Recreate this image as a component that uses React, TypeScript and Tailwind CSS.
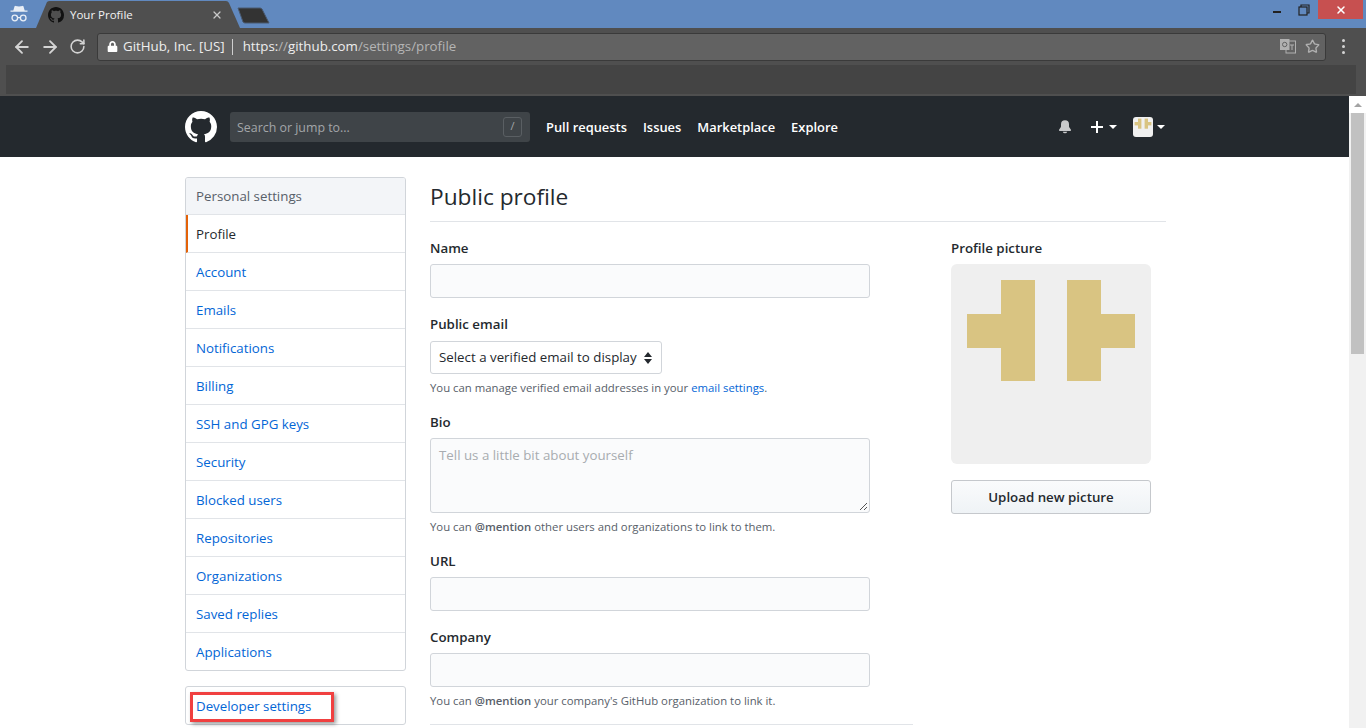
import { ArrowLeft, ArrowRight, RotateCw, Star, X } from "lucide-react";
import { GoBellFill } from "react-icons/go";
import { FaLock } from "react-icons/fa";

const menuItems = [
  "Account",
  "Emails",
  "Notifications",
  "Billing",
  "SSH and GPG keys",
  "Security",
  "Blocked users",
  "Repositories",
  "Organizations",
  "Saved replies",
  "Applications",
];

function GithubMark({ size, color }: { size: number; color: string }) {
  return (
    <svg width={size} height={size} viewBox="0 0 16 16" fill={color} className="relative shrink-0">
      <path d="M8 0C3.58 0 0 3.58 0 8c0 3.54 2.29 6.53 5.47 7.59.4.07.55-.17.55-.38 0-.19-.01-.82-.01-1.49-2.01.37-2.53-.49-2.69-.94-.09-.23-.48-.94-.82-1.13-.28-.15-.68-.52-.01-.53.63-.01 1.08.58 1.23.82.72 1.21 1.87.87 2.33.66.07-.52.28-.87.51-1.07-1.78-.2-3.64-.89-3.64-3.95 0-.87.31-1.59.82-2.15-.08-.2-.36-1.02.08-2.12 0 0 .67-.21 2.2.82.64-.18 1.32-.27 2-.27.68 0 1.36.09 2 .27 1.53-1.04 2.2-.82 2.2-.82.44 1.1.16 1.92.08 2.12.51.56.82 1.27.82 2.15 0 3.07-1.87 3.75-3.65 3.95.29.25.54.73.54 1.48 0 1.07-.01 1.93-.01 2.2 0 .21.15.46.55.38A8.013 8.013 0 0016 8c0-4.42-3.58-8-8-8z" />
    </svg>
  );
}

function Identicon() {
  return (
    <svg viewBox="0 0 200 200" className="block h-full w-full" fill="#d9c482">
      <rect x="50" y="16" width="34" height="101" />
      <rect x="16" y="50" width="34" height="34" />
      <rect x="116" y="16" width="34" height="101" />
      <rect x="150" y="50" width="34" height="34" />
    </svg>
  );
}

function Caret() {
  return <span className="block h-0 w-0 border-x-4 border-t-4 border-x-transparent border-t-white" />;
}

function BrowserChrome() {
  return (
    <div className="shrink-0">
      {/* tab strip */}
      <div className="relative flex h-[28px] bg-[#6189bf]">
        <div className="flex w-[36px] items-center justify-center pl-[1px]">
          <svg width="20" height="20" viewBox="0 0 20 20" fill="none" className="-mt-[1px]">
            <path d="M5.5 2.5q.3-.8 1-.6l3.5.7 3.5-.7q.7-.2 1 .6l1.2 4h2.8v1.2H1.500V6.500h2.800z" fill="#e8eef6" />
            <circle cx="5.8" cy="14" r="2.8" stroke="#e8eef6" strokeWidth="1.3" />
            <circle cx="14.2" cy="14" r="2.8" stroke="#e8eef6" strokeWidth="1.3" />
            <path d="M8.5 13.6h3" stroke="#e8eef6" strokeWidth="1.2" />
          </svg>
        </div>
        <div className="relative flex w-[204px] items-center pl-[12px] pt-[2px]">
          <svg className="absolute inset-0" width="204" height="28" viewBox="0 0 204 28">
            <path d="M0 28 L11 2 Q12 1 14 1 H190 Q192 1 193 3 L204 28 Z" fill="#4f4f4f" />
          </svg>
          <GithubMark size={16} color="#111111" />
          <span className="relative ml-[6px] text-[11.5px] text-[#f2f2f2]">Your Profile</span>
          <X className="absolute right-[17px] top-[9px] text-[#c8c8c8]" size={12} strokeWidth={2.5} />
        </div>
        <svg className="-ml-[3px] mt-[7px]" width="34" height="18" viewBox="0 0 34 18">
          <path d="M1 1 H23 Q24 1 25 2 L32 16 H8 Q7 16 6 15 Z" fill="#333" stroke="#4a5a70" />
        </svg>
        <div className="absolute right-[3px] top-0 flex h-[19px] items-center">
          <span className="mr-[17px] mt-[5px] h-[2px] w-[8px] bg-[#222]" />
          <svg width="12" height="12" viewBox="0 0 12 12" fill="none" stroke="#222" strokeWidth="1.2" className="mr-[8px]">
            <rect x="1" y="3" width="8" height="8" />
            <path d="M3 3V1h8v8H9" />
          </svg>
          <div className="flex h-[19px] w-[45px] items-center justify-center bg-[#c75050]">
            <X className="text-white" size={12} strokeWidth={3} />
          </div>
        </div>
      </div>
      {/* toolbar */}
      <div className="flex h-[37px] items-center bg-[#4f4f4f]">
        <div className="flex w-[97px] items-center pl-[12px] text-[#d4d4d4]">
          <ArrowLeft size={20} strokeWidth={2.2} />
          <ArrowRight className="ml-[8px]" size={20} strokeWidth={2.2} />
          <RotateCw className="ml-[9px]" size={17} strokeWidth={2.2} />
        </div>
        <div className="flex h-[28px] w-[1229px] items-center rounded-[3px] border border-[#3a3a3a] bg-[#626262] pl-[9px] text-[13.3px] text-[#eeeeee]">
          <FaLock className="text-[11px] text-white" />
          <span className="ml-[5px]">GitHub, Inc. [US]</span>
          <span className="ml-[7px] mr-[10px] h-[16px] w-px bg-[#cfcfcf]" />
          <span>https:</span>
          <span className="text-[#b5b5b5]">//</span>
          <span>github.com</span>
          <span className="text-[#b5b5b5]">/settings/profile</span>
          <div className="ml-auto flex items-center pr-[5px]">
            <svg width="16" height="15" viewBox="0 0 16 15" className="mr-[9px]">
              <rect x="6" y="2" width="9.5" height="12" fill="none" stroke="#b0b0b0" />
              <rect x="0" y="0" width="9.5" height="11" fill="#b0b0b0" />
              <circle cx="4.7" cy="5.5" r="2.2" fill="none" stroke="#626262" />
              <path d="M10 6h4M12 6v5" stroke="#b0b0b0" />
            </svg>
            <Star className="text-[#b0b0b0]" size={15} strokeWidth={2.2} />
          </div>
        </div>
        <div className="ml-[16px] flex flex-col gap-[3px]">
          <span className="h-[3px] w-[3px] rounded-full bg-[#d4d4d4]" />
          <span className="h-[3px] w-[3px] rounded-full bg-[#d4d4d4]" />
          <span className="h-[3px] w-[3px] rounded-full bg-[#d4d4d4]" />
        </div>
      </div>
      {/* bookmarks */}
      <div className="h-[31px] bg-[#4f4f4f] px-[6px] pb-[2px]">
        <div className="mr-[4px] h-full bg-[#444444]" />
      </div>
    </div>
  );
}

function Field({ label, className }: { label: string; className?: string }) {
  return (
    <div className={className}>
      <label className="block text-[13.3px] font-semibold leading-[20px] text-[#24292e]">{label}</label>
      <div className="mt-[6px] h-[34px] w-[440px] rounded-[3px] border border-[#d1d5da] bg-[#fafbfc]" />
    </div>
  );
}

function Note({ children }: { children: React.ReactNode }) {
  return <p className="mt-[6px] text-[11.35px] leading-[16px] text-[#586069]">{children}</p>;
}

function Sidebar() {
  return (
    <div className="w-[221px] shrink-0 text-[13.3px]">
      <div className="overflow-hidden rounded-[3px] border border-[#d1d5da]">
        <div className="flex h-[37px] items-center border-b border-[#e1e4e8] bg-[#f3f5f8] px-[10px] pt-[2px] font-medium text-[#586069]">
          Personal settings
        </div>
        <div className="flex h-[38px] items-center border-b border-[#e1e4e8] border-l-2 border-l-[#e36209] pl-[8px] pt-[2px] font-medium text-[#24292e]">
          Profile
        </div>
        {menuItems.map((item, i) => (
          <div
            key={item}
            className={
              i === menuItems.length - 1
                ? "flex h-[37px] items-center px-[10px] pt-[2px] text-[#0366d6]"
                : "flex h-[38px] items-center border-b border-[#e1e4e8] px-[10px] pt-[2px] text-[#0366d6]"
            }
          >
            {item}
          </div>
        ))}
      </div>
      <div className="relative mt-[15px] flex h-[39px] items-center rounded-[3px] border border-[#d1d5da] px-[10px] pt-[2px] text-[#0366d6]">
        Developer settings
        <div className="absolute left-[4px] top-[5px] h-[30px] w-[144px] border-[3px] border-[#f04040] shadow-[2px_2px_4px_rgba(0,0,0,0.4)]" />
      </div>
    </div>
  );
}

export default function App() {
  return (
    <div className="flex h-[728px] w-[1366px] flex-col overflow-hidden bg-white font-['Open_Sans',sans-serif]">
      <BrowserChrome />
      <div className="flex min-h-0 flex-1">
        <div className="min-w-0 flex-1 overflow-hidden">
          <header className="flex h-[61px] items-center bg-[#24292e] pl-[185px] pr-[184px] text-[12.9px] font-semibold text-white">
            <GithubMark size={32} color="#ffffff" />
            <div className="ml-[13px] flex h-[30px] w-[300px] items-center rounded-[3px] bg-[#3f4448] pl-[7px] pr-[8px] text-[12.4px] font-normal text-[#a3a6a9]">
              <span className="mt-[3px]">Search or jump to...</span>
              <span className="ml-auto flex h-[20px] w-[19px] items-center justify-center rounded-[3px] border border-[#5a5f63] text-[11px]">/</span>
            </div>
            <nav className="ml-[16px] mt-[3px] flex gap-[16px]">
              <a>Pull requests</a>
              <a>Issues</a>
              <a>Marketplace</a>
              <a>Explore</a>
            </nav>
            <div className="ml-auto flex items-center">
              <GoBellFill className="text-[16px] text-[#c8c9cb]" />
              <svg width="12" height="12" viewBox="0 0 12 12" className="ml-[18px]" fill="#fff">
                <rect x="5" width="2" height="12" />
                <rect y="5" width="12" height="2" />
              </svg>
              <span className="ml-[6px]"><Caret /></span>
              <div className="ml-[16px] h-[20px] w-[20px] overflow-hidden rounded-[3px] bg-[#f0f0f0]">
                <Identicon />
              </div>
              <span className="ml-[4px]"><Caret /></span>
            </div>
          </header>
          <div className="flex pl-[185px] pt-[20px] text-[#24292e]">
            <Sidebar />
            <main className="ml-[24px] w-[736px]">
              <h1 className="h-[45px] border-b border-[#e1e4e8] text-[22.7px] leading-[39px] text-[#24292e]">Public profile</h1>
              <div className="flex">
                <div className="w-[483px] shrink-0">
                  <Field label="Name" className="mt-[16px]" />
                  <div className="mt-[16px]">
                    <label className="block text-[13.3px] font-semibold leading-[20px]">Public email</label>
                    <div className="mt-[7px] flex h-[33px] w-[232px] items-center rounded-[3px] border border-[#d1d5da] pl-[8px] text-[13.3px] whitespace-nowrap">
                      Select a verified email to display
                      <svg width="8" height="12" viewBox="0 0 8 12" className="ml-[7px]" fill="#24292e">
                        <path d="M4 0l4 5H0zM4 12l4-5H0z" />
                      </svg>
                    </div>
                    <Note>
                      You can manage verified email addresses in your <a className="text-[#0366d6]">email settings</a>.
                    </Note>
                  </div>
                  <div className="mt-[16px]">
                    <label className="block text-[13.3px] font-semibold leading-[20px]">Bio</label>
                    <div className="relative mt-[6px] h-[75px] w-[440px] rounded-[3px] border border-[#d1d5da] bg-[#fafbfc] px-[8px] py-[7px] text-[13.3px] text-[#a8acb0]">
                      Tell us a little bit about yourself
                      <svg width="9" height="9" viewBox="0 0 9 9" className="absolute bottom-[1px] right-[1px]" stroke="#555">
                        <path d="M1 8l7-7M5 8l3-3" />
                      </svg>
                    </div>
                    <Note>
                      You can <b className="font-semibold">@mention</b> other users and organizations to link to them.
                    </Note>
                  </div>
                  <Field label="URL" className="mt-[16px]" />
                  <Field label="Company" className="mt-[16px]" />
                  <Note>
                    You can <b className="font-semibold">@mention</b> your company's GitHub organization to link it.
                  </Note>
                  <div className="mt-[15px] border-t border-[#e1e4e8]" />
                </div>
                <div className="ml-[38px] w-[200px] shrink-0">
                  <div className="mt-[16px] text-[13.3px] font-semibold leading-[20px]">Profile picture</div>
                  <div className="mt-[6px] h-[200px] w-[200px] overflow-hidden rounded-[6px] bg-[#efefef]">
                    <Identicon />
                  </div>
                  <div className="mt-[16px] flex h-[34px] items-center justify-center rounded-[3px] border border-[#c5c8cc] bg-gradient-to-b from-[#fafbfc] to-[#eff3f6] pt-[2px] text-[13.3px] font-semibold">
                    Upload new picture
                  </div>
                </div>
              </div>
            </main>
          </div>
        </div>
        {/* page scrollbar */}
        <div className="flex w-[17px] shrink-0 flex-col items-center bg-[#f1f1f1]">
          <div className="flex h-[17px] w-full items-center justify-center bg-white">
            <span className="h-0 w-0 border-x-4 border-b-4 border-x-transparent border-b-[#a3a3a3]" />
          </div>
          <div className="h-[241px] w-[13px] bg-[#c1c1c1]" />
        </div>
      </div>
    </div>
  );
}
